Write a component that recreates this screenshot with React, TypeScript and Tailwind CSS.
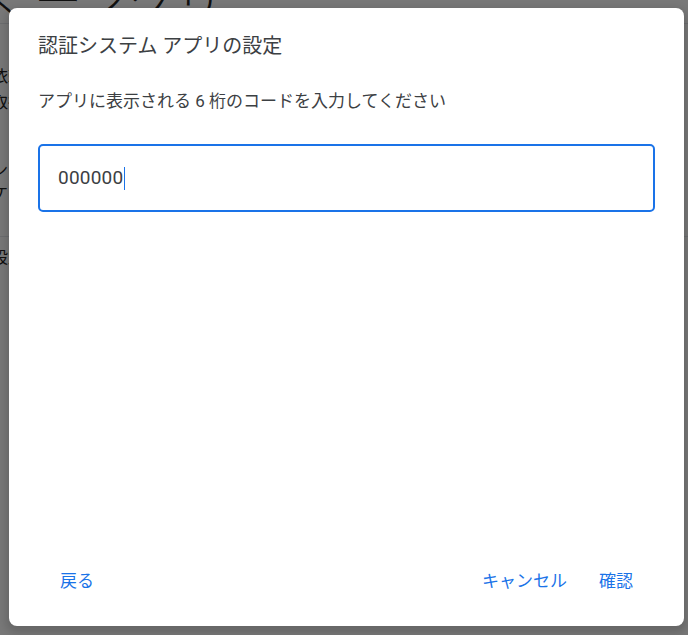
import React from "react";

const font = "font-['Roboto','Noto_Sans_CJK_JP',sans-serif]";

export default function App() {
  return (
    <div className={`relative h-[635px] w-[688px] overflow-hidden bg-white ${font}`}>
      {/* page behind the dialog */}
      <div className="text-[#222]">
        <div className="h-[45px] pl-0 -mt-[22px] text-[48px] leading-none font-light whitespace-nowrap -ml-[14px]">
          くーンクリ
        </div>
        <div className="border-t border-gray-200 pt-[40px] pl-0 -ml-[8px] text-[16px] leading-[26px]">
          <p>依頼</p>
          <p>取得</p>
        </div>
        <div className="pt-[44px] -ml-[8px] text-[16px] leading-[22px]">
          <p>ンス</p>
          <p>ケロ</p>
        </div>
        <div className="mt-[32px] border-t border-gray-200 pt-[10px] -ml-[8px] text-[16px] leading-[22px]">
          <p>設定</p>
        </div>
      </div>

      {/* scrim */}
      <div className="absolute inset-0 bg-black/[0.53]" />

      {/* dialog */}
      <div className="absolute left-[9px] top-[8px] flex h-[618px] w-[675px] flex-col rounded-[8px] bg-white shadow-[0_4px_8px_3px_rgba(0,0,0,0.15)]">
        <div className="px-[29px] pt-[25px]">
          <h2 className="text-[20px] leading-[26px] text-[#3c4043]">認証システム アプリの設定</h2>
          <p className="mt-[31px] text-[17px] leading-[22px] text-[#3c4043]">
            アプリに表示される 6 桁のコードを入力してください
          </p>
          <div className="mt-[32px] flex h-[68px] w-[617px] items-center rounded-[5px] border-2 border-[#1a73e8] pl-[18px]">
            <span className="text-[19px] tracking-[0.2px] text-[#3c4043]">000000</span>
            <span className="ml-px h-[23px] w-px bg-[#1a73e8]" />
          </div>
        </div>

        <div className="mt-auto flex items-center pb-[27px] pl-[35px] pr-[35px] text-[17px] leading-[24px] text-[#1a73e8]">
          <button className="px-[16px] py-[6px]">戻る</button>
          <div className="flex-1" />
          <button className="px-[16px] py-[6px]">キャンセル</button>
          <button className="px-[16px] py-[6px]">確認</button>
        </div>
      </div>
    </div>
  );
}
